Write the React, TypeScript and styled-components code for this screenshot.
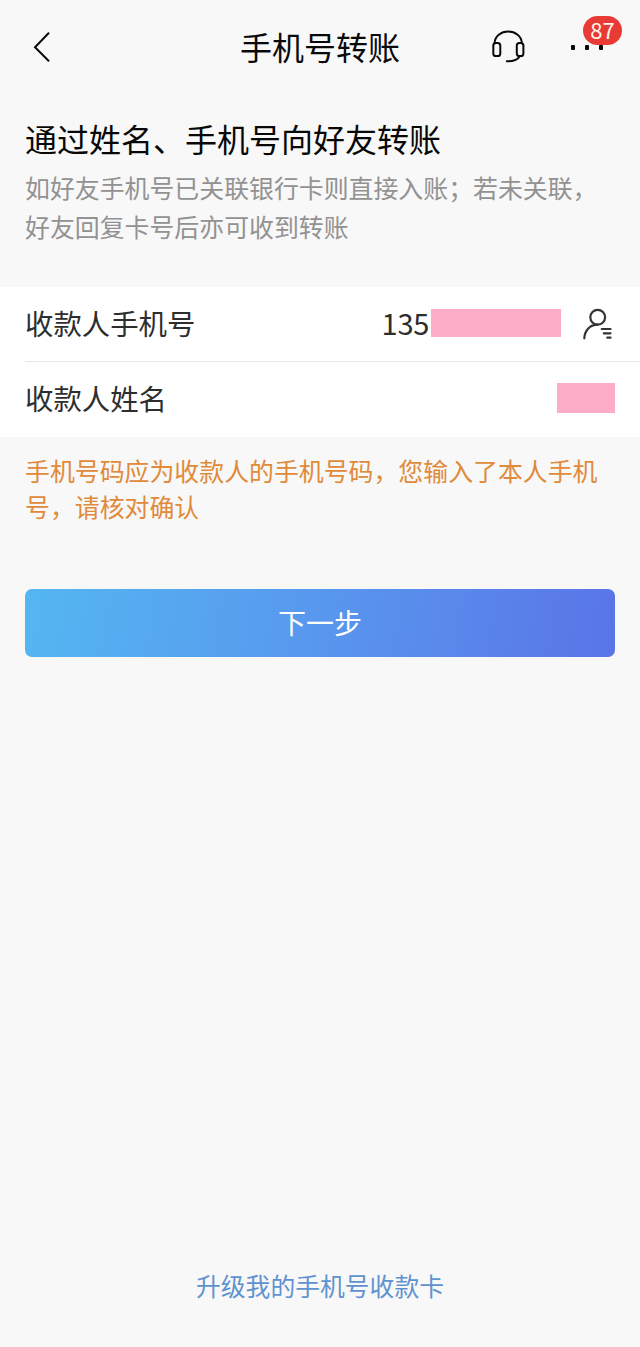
import React from 'react';
import styled, { createGlobalStyle } from 'styled-components';

const GlobalStyle = createGlobalStyle`
  *, *::before, *::after { box-sizing: border-box; }
  body {
    margin: 0;
    background: #f8f8f8;
    font-family: "Noto Sans CJK SC", "Noto Sans", sans-serif;
  }
`;

const Screen = styled.main`
  display: flex;
  flex-direction: column;
  width: 640px;
  height: 1347px;
  overflow: hidden;
  background: #f8f8f8;
`;

const NavBar = styled.header`
  display: grid;
  grid-template-columns: 160px 1fr 160px;
  align-items: center;
  height: 94px;
`;

const BackButton = styled.button`
  display: flex;
  margin: 0 0 0 30px;
  padding: 0;
  border: 0;
  background: none;
`;

const NavTitle = styled.h1`
  margin: 0;
  padding-bottom: 2px;
  text-align: center;
  font-size: 32px;
  line-height: 48px;
  font-weight: 400;
  color: #0a0a0a;
`;

const NavActions = styled.div`
  display: flex;
  align-items: center;
  gap: 43px;
  padding-left: 10px;
`;

const MoreButton = styled.div`
  position: relative;
  display: flex;
  gap: 10px;
`;

const Dot = styled.span`
  width: 4px;
  height: 5px;
  border-radius: 1px;
  background: #0a0a0a;
`;

const Badge = styled.span`
  position: absolute;
  left: 12px;
  bottom: 5px;
  display: flex;
  align-items: center;
  justify-content: center;
  width: 39px;
  height: 29px;
  border-radius: 15px;
  background: #e93b36;
  color: #fff3ea;
  font-size: 22px;
  line-height: 26px;
  padding-bottom: 3px;
`;

const Intro = styled.section`
  height: 193px;
  padding: 20px 25px 0;
`;

const Heading = styled.h2`
  margin: 0;
  font-size: 32px;
  line-height: 48px;
  font-weight: 400;
  color: #080808;
`;

const Description = styled.p`
  margin: 6px 0 0;
  font-size: 24.9px;
  line-height: 39px;
  color: #929292;
  white-space: nowrap;
`;

const Form = styled.section`
  background: #fff;
`;

const Row = styled.div<{ $divided?: boolean }>`
  display: flex;
  align-items: center;
  height: 75px;
  margin-left: 25px;
  padding-right: 25px;
  padding-bottom: 3px;
  border-bottom: ${(p) => (p.$divided ? '1px solid #e8e8e8' : '0')};
`;

const Label = styled.span`
  flex: 1;
  font-size: 28.4px;
  line-height: 42px;
  color: #2e2e2e;
`;

const Digits = styled.span`
  margin-right: 2px;
  padding-bottom: 2px;
  font-size: 29px;
  line-height: 40px;
  letter-spacing: -0.3px;
  color: #2e2e2e;
`;

const Mask = styled.span<{ $width: number; $height: number }>`
  width: ${(p) => p.$width}px;
  height: ${(p) => p.$height}px;
  background: #feadc8;
`;

const ContactButton = styled.button`
  display: flex;
  margin: 0 0 0 20px;
  padding: 0;
  border: 0;
  background: none;
`;

const Warning = styled.p`
  margin: 0;
  padding: 15px 25px 0;
  height: 152px;
  font-size: 24.9px;
  line-height: 36px;
  color: #e08a3a;
  white-space: nowrap;
`;

const NextButton = styled.button`
  height: 68px;
  margin: 0 25px;
  padding: 0 0 3px;
  border: 0;
  border-radius: 7px;
  background: linear-gradient(100deg, #54b7f1 0%, #5897ee 50%, #5a74e7 100%);
  color: #fff;
  font-family: inherit;
  font-size: 28px;
  line-height: 42px;
`;

const Footer = styled.footer`
  margin-top: auto;
  padding-bottom: 44px;
  text-align: center;
`;

const FooterLink = styled.a`
  font-size: 24.8px;
  line-height: 36px;
  color: #5f93cf;
`;

const BackIcon = () => (
  <svg width="24" height="34" viewBox="0 0 24 34" fill="none" stroke="#0a0a0a" strokeWidth="2" strokeLinecap="round">
    <path d="M18.5 3.2 5 17.2l13.5 13.5" />
  </svg>
);

const HeadsetIcon = () => (
  <svg width="38" height="38" viewBox="0 0 38 38" fill="none" stroke="#0a0a0a" strokeWidth="2" strokeLinecap="round">
    <path d="M4.5 15.2C4.8 8.200 11 3.600 18.200 3.600s13.400 4.600 13.700 11.600" />
    <rect x="3.300" y="15" width="7" height="13" rx="2.600" />
    <rect x="26.800" y="15" width="6.600" height="13" rx="2.600" />
    <path d="M30 28c-2.300 4-6.500 5.500-13.200 5.300" />
  </svg>
);

const ContactIcon = () => (
  <svg width="34" height="34" viewBox="0 0 34 34" fill="none" stroke="#333" strokeWidth="2.2" strokeLinecap="round">
    <circle cx="16.700" cy="11.200" r="7.400" />
    <path d="M3.300 32.300C3.600 25 8.500 18.600 16.700 18.600M20.800 23h8.700M22.800 27.300h6.700M26.300 31.700h3.200" />
  </svg>
);

export default function App() {
  return (
    <>
      <GlobalStyle />
      <Screen>
        <NavBar>
          <BackButton aria-label="返回"><BackIcon /></BackButton>
          <NavTitle>手机号转账</NavTitle>
          <NavActions>
            <HeadsetIcon />
            <MoreButton>
              <Dot /><Dot /><Dot />
              <Badge>87</Badge>
            </MoreButton>
          </NavActions>
        </NavBar>
        <Intro>
          <Heading>通过姓名、手机号向好友转账</Heading>
          <Description>
            如好友手机号已关联银行卡则直接入账；若未关联，<br />
            好友回复卡号后亦可收到转账
          </Description>
        </Intro>
        <Form>
          <Row $divided>
            <Label>收款人手机号</Label>
            <Digits>135</Digits>
            <Mask $width={130} $height={28} />
            <ContactButton aria-label="通讯录"><ContactIcon /></ContactButton>
          </Row>
          <Row>
            <Label>收款人姓名</Label>
            <Mask $width={58} $height={30} />
          </Row>
        </Form>
        <Warning>
          手机号码应为收款人的手机号码，您输入了本人手机<br />
          号，请核对确认
        </Warning>
        <NextButton>下一步</NextButton>
        <Footer>
          <FooterLink>升级我的手机号收款卡</FooterLink>
        </Footer>
      </Screen>
    </>
  );
}
